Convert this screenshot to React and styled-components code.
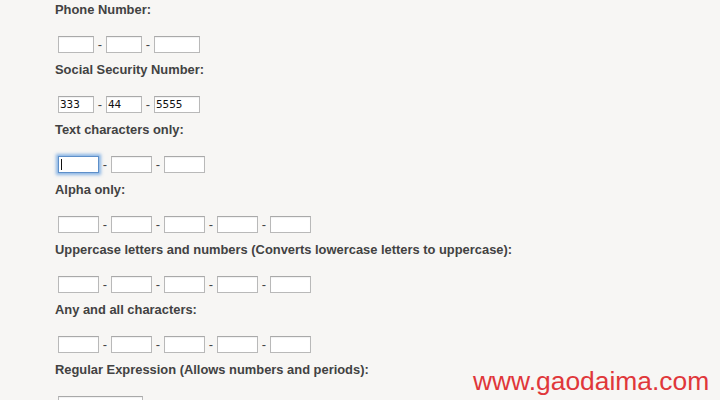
import React from "react";
import styled, { createGlobalStyle } from "styled-components";

const GlobalStyle = createGlobalStyle`
    html, body {
        margin: 0;
        padding: 0;
        background: #f7f6f4;
        font-family: "Liberation Sans", Arial, sans-serif;
        overflow: hidden;
    }
`;

const Page = styled.div`
    padding: 0 0 0 55px;
    height: 400px;
    overflow: hidden;
`;

const Form = styled.form`
    display: flex;
    flex-direction: column;
    gap: 7px;
`;

const Section = styled.div`
    display: flex;
    flex-direction: column;
`;

const Label = styled.label`
    display: block;
    height: 20px;
    line-height: 20px;
    font-size: 12.9px;
    font-weight: bold;
    color: #424242;
`;

const Row = styled.div`
    display: flex;
    align-items: center;
    margin-top: 16px;
    padding-left: 3px;
    height: 17px;
`;

const Dash = styled.span`
    display: inline-block;
    width: 12px;
    text-align: center;
    font-size: 13px;
    color: #444;
`;

const Field = styled.span`
    position: relative;
    display: inline-flex;
`;

const Input = styled.input`
    box-sizing: border-box;
    width: ${(p) => p.$w}px;
    height: 17px;
    margin: 0;
    padding: 0 1px;
    border: 1px solid #b9b9b9;
    border-top-color: #a9a9a9;
    background: #fff;
    font-family: "DejaVu Sans Mono", monospace;
    font-size: 11px;
    color: #111;
    outline: none;
    box-shadow: ${(p) =>
        p.$focus
            ? "0 0 3px 2px rgba(92, 154, 222, 0.7)"
            : "inset 0 1px 1px rgba(0, 0, 0, 0.06)"};
    border-color: ${(p) => (p.$focus ? "#5d8fc9" : undefined)};
`;

const Caret = styled.span`
    position: absolute;
    left: 3px;
    top: 3px;
    width: 1px;
    height: 11px;
    background: #111;
`;

const Watermark = styled.div`
    position: absolute;
    left: 473px;
    top: 366px;
    font-family: "Liberation Sans", Arial, sans-serif;
    font-size: 26.4px;
    color: #e0373a;
`;

const sections = [
    { label: "Phone Number:", widths: [36, 36, 46] },
    { label: "Social Security Number:", widths: [36, 36, 46], values: ["333", "44", "5555"] },
    { label: "Text characters only:", widths: [41, 41, 41], focus: 0 },
    { label: "Alpha only:", widths: [41, 41, 41, 41, 41] },
    {
        label: "Uppercase letters and numbers (Converts lowercase letters to uppercase):",
        widths: [41, 41, 41, 41, 41],
    },
    { label: "Any and all characters:", widths: [41, 41, 41, 41, 41] },
    { label: "Regular Expression (Allows numbers and periods):", widths: [85] },
];

const InputRow = ({ widths, values = [], focus }) => (
    <Row>
        {widths.map((w, i) => (
            <React.Fragment key={i}>
                {i > 0 && <Dash>-</Dash>}
                <Field>
                    <Input
                        type="text"
                        $w={w}
                        $focus={focus === i}
                        defaultValue={values[i] || ""}
                    />
                    {focus === i && <Caret />}
                </Field>
            </React.Fragment>
        ))}
    </Row>
);

const App = () => (
    <>
        <GlobalStyle />
        <Page>
            <Form onSubmit={(e) => e.preventDefault()}>
                {sections.map((s) => (
                    <Section key={s.label}>
                        <Label>{s.label}</Label>
                        <InputRow widths={s.widths} values={s.values} focus={s.focus} />
                    </Section>
                ))}
            </Form>
        </Page>
        <Watermark>www.gaodaima.com</Watermark>
    </>
);

export default App;
